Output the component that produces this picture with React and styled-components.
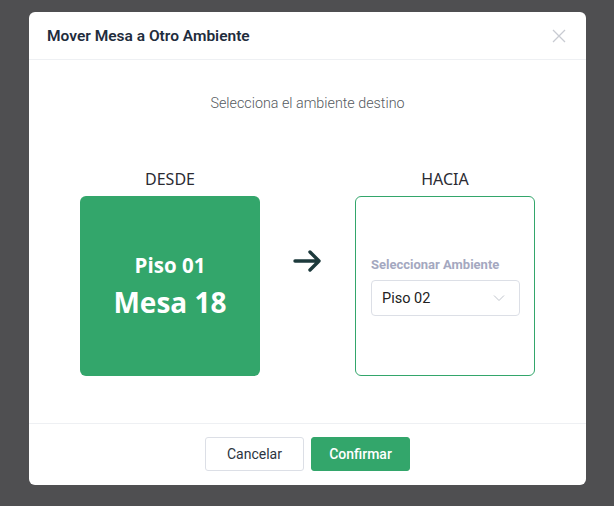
import styled, { createGlobalStyle } from "styled-components";

const Global = createGlobalStyle`
  html, body { margin: 0; padding: 0; }
  body {
    background: #4f4f51;
    font-family: Roboto, "Noto Sans", "Liberation Sans", sans-serif;
    width: 614px;
    height: 506px;
    overflow: hidden;
  }
`;

const Backdrop = styled.div`
  width: 614px;
  height: 506px;
  padding-top: 12px;
  box-sizing: border-box;
  display: flex;
  justify-content: center;
  align-items: flex-start;
`;

const Modal = styled.div`
  width: 557px;
  background: #fff;
  border-radius: 6px;
  margin-left: 1px;
  overflow: hidden;
`;

const Header = styled.div`
  height: 47px;
  padding: 0 20px 0 18px;
  display: flex;
  align-items: center;
  justify-content: space-between;
  border-bottom: 1px solid #eef0f3;
`;

const Title = styled.h3`
  margin: 0;
  font-size: 15.5px;
  font-weight: 600;
  color: #1f2d3d;
`;

const Close = styled.button`
  border: 0;
  background: none;
  padding: 0;
  width: 14px;
  height: 14px;
  display: flex;
  color: #c8cbd2;
`;

const Body = styled.div`
  height: 363px;
  box-sizing: border-box;
  padding-top: 34px;
  display: flex;
  flex-direction: column;
  align-items: center;
`;

const Subtitle = styled.p`
  margin: 0;
  font-size: 14.3px;
  font-weight: 300;
  color: #555a60;
  line-height: 18px;
`;

const Row = styled.div`
  margin-top: 57px;
  display: flex;
  align-items: center;
  gap: 33px;
`;

const Column = styled.div`
  display: flex;
  flex-direction: column;
  align-items: center;
`;

const Label = styled.div`
  font-family: "Noto Sans", "Open Sans", sans-serif;
  font-size: 16px;
  color: #2b2b33;
  line-height: 20px;
  margin-bottom: 7px;
`;

const Card = styled.div`
  width: 180px;
  height: 180px;
  box-sizing: border-box;
  border-radius: 6px;
  display: flex;
  flex-direction: column;
  justify-content: center;
  background: ${(p) => (p.filled ? "#33a66b" : "#fff")};
  border: ${(p) => (p.filled ? "none" : "1px solid #33a66b")};
  align-items: ${(p) => (p.filled ? "center" : "stretch")};
  padding: ${(p) => (p.filled ? "0" : "1px 14px 0 15px")};
`;

const Piso = styled.div`
  font-family: "Open Sans", "Noto Sans", sans-serif;
  font-weight: 700;
  font-size: 20.5px;
  color: #fff;
  line-height: 26px;
`;

const Mesa = styled.div`
  font-family: "Open Sans", "Noto Sans", sans-serif;
  font-weight: 700;
  font-size: 28px;
  color: #fff;
  line-height: 36px;
  margin-top: 6px;
`;

const Arrow = styled.div`
  width: 29px;
  height: 26px;
  margin-bottom: 24px;
  display: flex;
  color: #1d3a3c;
`;

const FieldLabel = styled.div`
  font-size: 13px;
  font-weight: 700;
  color: #a4a8c0;
  margin-bottom: 8px;
`;

const Select = styled.div`
  height: 36px;
  box-sizing: border-box;
  border: 1px solid #dcdfe6;
  border-radius: 4px;
  display: flex;
  align-items: center;
  justify-content: space-between;
  padding: 0 14px 0 10px;
  font-size: 14.5px;
  color: #222;
`;

const Footer = styled.div`
  border-top: 1px solid #eef0f3;
  height: 62px;
  box-sizing: border-box;
  display: flex;
  justify-content: center;
  align-items: flex-start;
  padding-top: 13px;
  gap: 7px;
`;

const Button = styled.button`
  width: 99px;
  height: 34px;
  border-radius: 3px;
  font-family: Roboto, sans-serif;
  font-size: 14px;
  cursor: pointer;
  background: ${(p) => (p.primary ? "#33a66b" : "#fff")};
  color: ${(p) => (p.primary ? "#fff" : "#2c3440")};
  border: 1px solid ${(p) => (p.primary ? "#33a66b" : "#dcdfe6")};
  font-weight: ${(p) => (p.primary ? 500 : 400)};
`;

export default function App() {
  return (
    <>
      <Global />
      <Backdrop>
        <Modal>
          <Header>
            <Title>Mover Mesa a Otro Ambiente</Title>
            <Close>
              <svg width="14" height="14" viewBox="0 0 14 14" fill="none" stroke="currentColor" strokeWidth="1.3">
                <path d="M1 1L13 13M13 1L1 13" />
              </svg>
            </Close>
          </Header>
          <Body>
            <Subtitle>Selecciona el ambiente destino</Subtitle>
            <Row>
              <Column>
                <Label>DESDE</Label>
                <Card filled>
                  <Piso>Piso 01</Piso>
                  <Mesa>Mesa 18</Mesa>
                </Card>
              </Column>
              <Arrow>
                <svg width="29" height="26" viewBox="0 0 29 26" fill="none" stroke="currentColor" strokeWidth="3.4" strokeLinecap="round" strokeLinejoin="round">
                  <path d="M2 13H26M17 4l9 9-9 9" />
                </svg>
              </Arrow>
              <Column>
                <Label>HACIA</Label>
                <Card>
                  <FieldLabel>Seleccionar Ambiente</FieldLabel>
                  <Select>
                    <span>Piso 02</span>
                    <svg width="12" height="8" viewBox="0 0 12 8" fill="none" stroke="#c0c4cc" strokeWidth="1">
                      <path d="M1 1.5l5 5 5-5" />
                    </svg>
                  </Select>
                </Card>
              </Column>
            </Row>
          </Body>
          <Footer>
            <Button>Cancelar</Button>
            <Button primary>Confirmar</Button>
          </Footer>
        </Modal>
      </Backdrop>
    </>
  );
}
